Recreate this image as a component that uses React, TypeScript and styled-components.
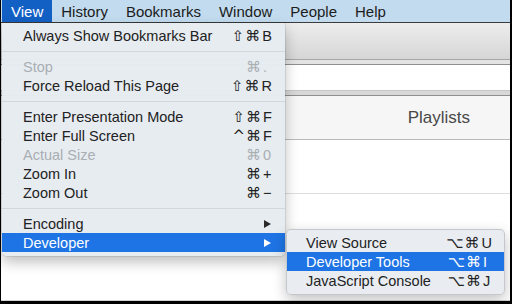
import styled, { createGlobalStyle } from "styled-components";

const GlobalStyle = createGlobalStyle`
  html, body {
    margin: 0;
    padding: 0;
    overflow: hidden;
  }
  body {
    font-family: "Liberation Sans", Arial, sans-serif;
  }
`;

const Screen = styled.div`
  position: relative;
  width: 512px;
  height: 304px;
  box-sizing: border-box;
  border-left: 1px solid #000;
  border-right: 2px solid #000;
  border-bottom: 3px solid #000;
  background: #fff;
  display: flex;
  flex-direction: column;
  overflow: hidden;
`;

const MenuBar = styled.div`
  height: 22px;
  display: flex;
  padding-left: 1px;
  background: #c2dbee;
  border-bottom: 1px solid #3c3c3c;
`;

const MenuTitle = styled.div<{ $active?: boolean }>`
  display: flex;
  align-items: center;
  padding: 0 9px;
  font-size: 15px;
  color: ${(p) => (p.$active ? "#fff" : "#1c1c1c")};
  background: ${(p) => (p.$active ? "#1360c5" : "transparent")};
`;

const Toolbar = styled.div`
  height: 36px;
  background: linear-gradient(#ededed, #d6d6d6);
  border-bottom: 1px solid #a6a6a6;
`;

const Band = styled.div<{ $h: number; $bg: string; $line: string }>`
  height: ${(p) => p.$h}px;
  background: ${(p) => p.$bg};
  border-bottom: 1px solid ${(p) => p.$line};
`;

const Header = styled.div`
  height: 43px;
  display: flex;
  align-items: center;
  justify-content: flex-end;
  padding-right: 40px;
  background: #f6f6f6;
  border-bottom: 1px solid #bababa;
  font-size: 17px;
  color: #484848;
`;

const Row = styled.div`
  height: 53px;
  border-bottom: 1px solid #dedede;
`;

const Rest = styled.div`
  flex: 1;
  border-bottom: 1px solid #d2d2d2;
`;

const Menu = styled.div`
  position: absolute;
  top: 23px;
  left: 1px;
  width: 283px;
  padding: 3px 0 4px;
  background: rgba(231, 236, 241, 0.98);
  border-radius: 0 0 5px 5px;
  box-shadow: 0 6px 14px rgba(0, 0, 0, 0.26), 0 0 0 1px rgba(0, 0, 0, 0.08);
`;

const SubMenu = styled.div`
  position: absolute;
  top: 229px;
  left: 285px;
  width: 217px;
  padding: 3px 0 4px;
  background: rgba(233, 237, 242, 0.98);
  border: 1px solid rgba(0, 0, 0, 0.16);
  border-radius: 5px;
  box-shadow: 0 5px 14px rgba(0, 0, 0, 0.24);
`;

const Item = styled.div<{ $disabled?: boolean; $selected?: boolean; $sub?: boolean }>`
  height: 19px;
  display: flex;
  align-items: center;
  padding: ${(p) => (p.$sub ? "0 12px 0 19px" : "0 13px 0 21px")};
  font-size: 14.5px;
  color: ${(p) => (p.$selected ? "#fff" : p.$disabled ? "#a9aeb3" : "#222")};
  background: ${(p) => (p.$selected ? "#1e74e4" : "transparent")};
`;

const Label = styled.span`
  flex: 1;
  white-space: nowrap;
`;

const Shortcut = styled.span`
  display: flex;
  align-items: center;
`;

const Mods = styled.span`
  font-family: "DejaVu Sans", sans-serif;
  font-size: 15px;
  letter-spacing: 1px;
`;

const Key = styled.span`
  min-width: 9px;
  margin-left: 1px;
  font-size: 14.5px;
`;

const Arrow = styled.span<{ $light?: boolean }>`
  width: 0;
  height: 0;
  margin-right: 1px;
  border-top: 4.5px solid transparent;
  border-bottom: 4.5px solid transparent;
  border-left: 7px solid ${(p) => (p.$light ? "#fff" : "#2a2a2a")};
`;

const Separator = styled.div`
  height: 1px;
  margin: 6px 0 5px;
  background: #d2d7dc;
`;

type Entry = { label: string; mods?: string; key?: string; disabled?: boolean } | "sep";

const viewMenu: Entry[] = [
  { label: "Always Show Bookmarks Bar", mods: "⇧⌘", key: "B" },
  "sep",
  { label: "Stop", mods: "⌘", key: ".", disabled: true },
  { label: "Force Reload This Page", mods: "⇧⌘", key: "R" },
  "sep",
  { label: "Enter Presentation Mode", mods: "⇧⌘", key: "F" },
  { label: "Enter Full Screen", mods: "^⌘", key: "F" },
  { label: "Actual Size", mods: "⌘", key: "0", disabled: true },
  { label: "Zoom In", mods: "⌘", key: "+" },
  { label: "Zoom Out", mods: "⌘", key: "−" },
  "sep",
];

const devMenu = [
  { label: "View Source", mods: "⌥⌘", key: "U" },
  { label: "Developer Tools", mods: "⌥⌘", key: "I" },
  { label: "JavaScript Console", mods: "⌥⌘", key: "J" },
];

const titles = ["View", "History", "Bookmarks", "Window", "People", "Help"];

const App = () => {
  return (
    <Screen>
      <GlobalStyle />
      <MenuBar>
        {titles.map((t, i) => (
          <MenuTitle key={t} $active={i === 0}>
            {t}
          </MenuTitle>
        ))}
      </MenuBar>
      <Toolbar />
      <Band $h={4} $bg="#e3e3e3" $line="#8f8f8f" />
      <Band $h={25} $bg="#fff" $line="#c6c6c6" />
      <Band $h={4} $bg="#d8d8d8" $line="#8e8e8e" />
      <Header>Playlists</Header>
      <Row />
      <Rest />

      <Menu>
        {viewMenu.map((e, i) =>
          e === "sep" ? (
            <Separator key={i} />
          ) : (
            <Item key={i} $disabled={e.disabled}>
              <Label>{e.label}</Label>
              <Shortcut>
                <Mods>{e.mods}</Mods>
                <Key>{e.key}</Key>
              </Shortcut>
            </Item>
          )
        )}
        <Item>
          <Label>Encoding</Label>
          <Arrow />
        </Item>
        <Item $selected>
          <Label>Developer</Label>
          <Arrow $light />
        </Item>
      </Menu>

      <SubMenu>
        {devMenu.map((e, i) => (
          <Item key={e.label} $sub $selected={i === 1}>
            <Label>{e.label}</Label>
            <Shortcut>
              <Mods>{e.mods}</Mods>
              <Key>{e.key}</Key>
            </Shortcut>
          </Item>
        ))}
      </SubMenu>
    </Screen>
  );
};

export default App;
